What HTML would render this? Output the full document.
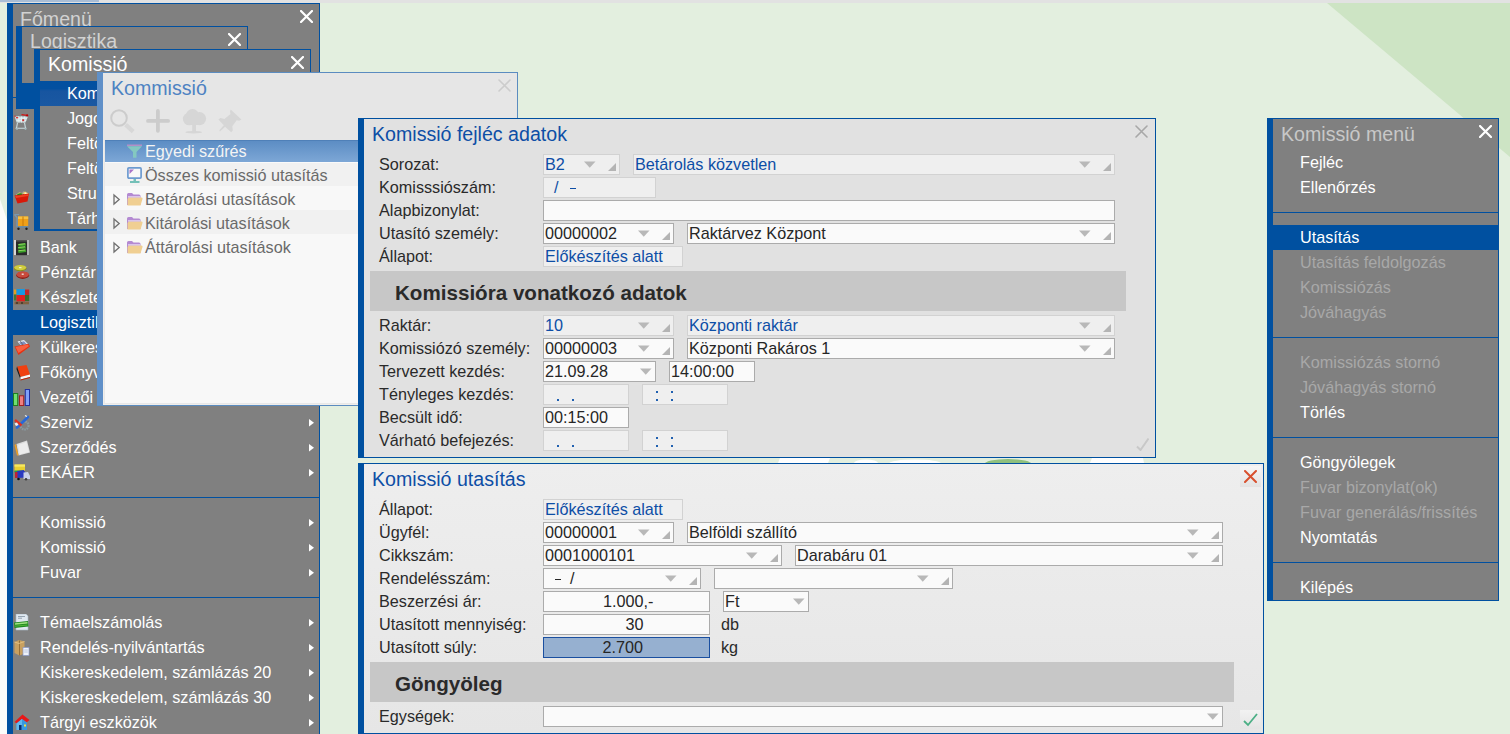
<!DOCTYPE html>
<html><head><meta charset="utf-8"><title>Komissió</title>
<style>
html,body{margin:0;padding:0;}
body{width:1510px;height:734px;overflow:hidden;position:relative;background:#e3efdf;font-family:"Liberation Sans",sans-serif;}
body div, body svg{position:absolute;}
.t{white-space:pre;}
.ico{width:16px;height:16px;}
</style></head><body>
<svg style="left:0;top:0" width="1510" height="734"><polygon points="1327,3 1510,3 1510,157" fill="#cde4c4"/><polygon points="0,199 7,220 7,734 0,734" fill="#fbfcfa"/></svg>
<div style="left:0px;top:0px;width:1510px;height:3px;background:#e2e2e2;"></div>
<div style="left:0px;top:0px;width:99px;height:2px;background:#a9bdd5;"></div>
<div style="left:7px;top:3px;width:313px;height:731px;background:#0050a0;"></div>
<div style="left:13px;top:4px;width:306px;height:730px;background:#808080;"></div>
<div class="t" style="left:20px;top:9px;font-size:19.6px;line-height:20px;color:#d2d2d2;">Főmenü</div>
<svg style="left:300px;top:10px" width="13" height="13" viewBox="0 0 13 13"><path d="M1 1L12 12M12 1L1 12" stroke="#fff" stroke-width="2.2" stroke-linecap="round" fill="none"/></svg>
<div style="left:13px;top:97px;width:306px;height:1px;background:#0050a0;"></div>
<div style="left:13px;top:310px;width:306px;height:25px;background:#0050a0;"></div>
<div style="left:13px;top:497px;width:306px;height:1px;background:#0050a0;"></div>
<div style="left:13px;top:597px;width:306px;height:1px;background:#0050a0;"></div>
<div class="t" style="left:40px;top:114px;font-size:16.2px;line-height:16px;color:#fff;">Beszerzés</div>
<svg style="left:309px;top:119px" width="5" height="7.5"><path d="M0 0L5 3.75L0 7.5Z" fill="#fff"/></svg>
<svg style="left:14px;top:114px" width="17" height="17" viewBox="0 0 17 17"><path d="M0.5 2.2L14 2.6L11.5 8.6L2.6 8.6Z" fill="#c8dcdf"/><path d="M2 4.2H13M2.6 6.4H12.2M4.5 2.4L5 8.6M7.5 2.5L7.6 8.6M10.5 2.6L9.8 8.6" stroke="#e8f4f6" stroke-width="0.8"/><path d="M7.5 0.6L13 1.3" stroke="#d01818" stroke-width="1.3"/><circle cx="13.2" cy="1.4" r="1.1" fill="#c00000"/><circle cx="1" cy="2.2" r="0.8" fill="#c83030"/><rect x="2" y="3" width="2.2" height="1.4" fill="#d83838"/><rect x="8.2" y="5.2" width="2" height="2" fill="#c83030"/><path d="M3.5 8.6L2.5 14.2M10.5 8.6L11.5 14.2M1.5 14.2H12.5" stroke="#c8dce0" stroke-width="1.1" fill="none"/><circle cx="3" cy="15.2" r="0.9" fill="#9ab0b4"/><circle cx="11.5" cy="15.2" r="0.9" fill="#9ab0b4"/></svg>
<div class="t" style="left:40px;top:139px;font-size:16.2px;line-height:16px;color:#fff;">Jogosultság</div>
<svg style="left:309px;top:144px" width="5" height="7.5"><path d="M0 0L5 3.75L0 7.5Z" fill="#fff"/></svg>
<div class="t" style="left:40px;top:164px;font-size:16.2px;line-height:16px;color:#fff;">Feltöltés</div>
<svg style="left:309px;top:169px" width="5" height="7.5"><path d="M0 0L5 3.75L0 7.5Z" fill="#fff"/></svg>
<div class="t" style="left:40px;top:189px;font-size:16.2px;line-height:16px;color:#fff;">Értékesítés</div>
<svg style="left:309px;top:194px" width="5" height="7.5"><path d="M0 0L5 3.75L0 7.5Z" fill="#fff"/></svg>
<svg style="left:14px;top:190px" width="17" height="17" viewBox="0 0 17 17"><path d="M2 5L5 2.5L8 3L11 1.5L14.5 3.5L14 7L3 8Z" fill="#f0d070"/><ellipse cx="6.5" cy="6.2" rx="3.8" ry="3" fill="#108a20"/><path d="M9.5 1L8 6" stroke="#a0a0a0" stroke-width="0.8"/><path d="M11 2.5L14 4L13 7L10 6Z" fill="#f8f0e0"/><path d="M0.5 5.5L15 3.5L13.5 11.5L3.5 13.5Z" fill="#d81808"/><path d="M1 6L14.5 4.2L14 6L2 8Z" fill="#f04020"/></svg>
<div class="t" style="left:40px;top:214px;font-size:16.2px;line-height:16px;color:#fff;">Tárhely</div>
<svg style="left:309px;top:219px" width="5" height="7.5"><path d="M0 0L5 3.75L0 7.5Z" fill="#fff"/></svg>
<svg style="left:14px;top:214px" width="17" height="17" viewBox="0 0 17 17"><path d="M0.5 0.5L3 3.5L3 12.5L14 12.5" stroke="#7898b0" stroke-width="1.3" fill="none"/><path d="M0.5 0.5L5 0.5" stroke="#7898b0" stroke-width="1.1"/><rect x="4" y="2.5" width="10.2" height="9.6" fill="#f0a018"/><path d="M4 2.5L14.2 2.5L14.2 5L4 5Z" fill="#f8c040"/><path d="M9 2.5V12" stroke="#c87808" stroke-width="1"/><rect x="2.5" y="12.3" width="12" height="1.4" fill="#6888a0"/><circle cx="4.5" cy="14.8" r="1.2" fill="#202020"/><circle cx="12.5" cy="14.8" r="1.2" fill="#202020"/></svg>
<div class="t" style="left:40px;top:239px;font-size:16.2px;line-height:16px;color:#fff;">Bank</div>
<svg style="left:309px;top:244px" width="5" height="7.5"><path d="M0 0L5 3.75L0 7.5Z" fill="#fff"/></svg>
<svg style="left:14px;top:240px" width="17" height="17" viewBox="0 0 17 17"><rect x="0" y="0" width="15.2" height="15.2" fill="#2a2a2a"/><rect x="0" y="0" width="2" height="15.2" fill="#d8d8d8"/><rect x="13" y="0" width="2.2" height="15.2" fill="#b8b8b8"/><rect x="2" y="0" width="11" height="1.6" fill="#505050"/><path d="M4 4L11.5 3L12 5.5L4.5 6.5ZM3.8 7L11.5 6L12 8.6L4.3 9.6ZM4 10.2L11.8 9.2L12.2 12L4.5 13Z" fill="#3aa028"/><path d="M4.5 4.5L11 3.8M4.3 7.5L11 6.8M4.5 10.7L11.2 10" stroke="#a8e070" stroke-width="0.8"/></svg>
<div class="t" style="left:40px;top:264px;font-size:16.2px;line-height:16px;color:#fff;">Pénztár</div>
<svg style="left:309px;top:269px" width="5" height="7.5"><path d="M0 0L5 3.75L0 7.5Z" fill="#fff"/></svg>
<svg style="left:14px;top:265px" width="17" height="17" viewBox="0 0 17 17"><ellipse cx="6.2" cy="3.2" rx="6.2" ry="3" fill="#889010"/><ellipse cx="6.2" cy="2.6" rx="6" ry="2.6" fill="#d0cc40"/><ellipse cx="8.7" cy="10.3" rx="6.4" ry="3.6" fill="#8a1c14"/><ellipse cx="8.7" cy="9.5" rx="6.2" ry="3.1" fill="#c84a3c"/><rect x="7.7" y="8.5" width="2" height="1.4" fill="#f0e0d8"/><rect x="5" y="2" width="2.5" height="1.2" fill="#f0f0c0"/></svg>
<div class="t" style="left:40px;top:289px;font-size:16.2px;line-height:16px;color:#fff;">Készletek</div>
<svg style="left:309px;top:294px" width="5" height="7.5"><path d="M0 0L5 3.75L0 7.5Z" fill="#fff"/></svg>
<svg style="left:14px;top:289px" width="17" height="17" viewBox="0 0 17 17"><rect x="0" y="0.5" width="2.5" height="5" fill="#e0a020"/><rect x="2.5" y="0" width="8.5" height="6" fill="#1898e0"/><rect x="11" y="0.5" width="4.2" height="5.5" fill="#c02828"/><rect x="0" y="5.5" width="2.5" height="6" fill="#407830"/><rect x="2.5" y="6" width="8.5" height="6.5" fill="#e02020"/><rect x="11" y="6" width="4.2" height="6" fill="#3a6a2a"/><rect x="0.5" y="12.5" width="14.5" height="2.8" fill="#806040"/><rect x="2" y="13" width="2" height="2" fill="#504030"/><rect x="7" y="13" width="2" height="2" fill="#504030"/></svg>
<div class="t" style="left:40px;top:314px;font-size:16.2px;line-height:16px;color:#fff;">Logisztika</div>
<svg style="left:309px;top:319px" width="5" height="7.5"><path d="M0 0L5 3.75L0 7.5Z" fill="#fff"/></svg>
<div class="t" style="left:40px;top:339px;font-size:16.2px;line-height:16px;color:#fff;">Külkereskedelem</div>
<svg style="left:309px;top:344px" width="5" height="7.5"><path d="M0 0L5 3.75L0 7.5Z" fill="#fff"/></svg>
<svg style="left:13.5px;top:340px" width="17" height="17" viewBox="0 0 17 17"><path d="M3.5 1.5L10 0L14 4L7.5 6Z" fill="#e8eef8"/><path d="M5 2.5L10 1.2L12.5 4L7.5 5.5Z" fill="#8090c0"/><path d="M6 0.5L9 5" stroke="#606060" stroke-width="0.8"/><path d="M0.5 6.5L14.5 3.8L16 6.5L4.5 15Z" fill="#e83010"/><path d="M1.5 7L14 4.5L14.8 6.3L4.5 13Z" fill="#f86040"/></svg>
<div class="t" style="left:40px;top:364px;font-size:16.2px;line-height:16px;color:#fff;">Főkönyv</div>
<svg style="left:309px;top:369px" width="5" height="7.5"><path d="M0 0L5 3.75L0 7.5Z" fill="#fff"/></svg>
<svg style="left:14.5px;top:364.5px" width="17" height="17" viewBox="0 0 17 17"><path d="M2 1.5L11.5 0L15 9.5L5.5 12Z" fill="#f04010"/><path d="M2 1.5L5.5 12L5.5 14.5L1.5 4Z" fill="#181818"/><path d="M5.5 12L15 9.5L15 12L5.5 14.5Z" fill="#f8f8f8"/><path d="M5.5 14.5L15 12L15 13L5.5 15.5Z" fill="#c02000"/></svg>
<div class="t" style="left:40px;top:389px;font-size:16.2px;line-height:16px;color:#fff;">Vezetői információ</div>
<svg style="left:309px;top:394px" width="5" height="7.5"><path d="M0 0L5 3.75L0 7.5Z" fill="#fff"/></svg>
<svg style="left:13px;top:389px" width="17" height="17" viewBox="0 0 17 17"><rect x="0.5" y="4.5" width="4.2" height="12" fill="#70e070" stroke="#208020" stroke-width="1"/><rect x="6.5" y="6.8" width="4.2" height="9.7" fill="#f08080" stroke="#a02020" stroke-width="1"/><rect x="12.3" y="0.5" width="4.2" height="16" fill="#80a0f8" stroke="#2030a0" stroke-width="1"/></svg>
<div class="t" style="left:40px;top:414px;font-size:16.2px;line-height:16px;color:#fff;">Szerviz</div>
<svg style="left:309px;top:419px" width="5" height="7.5"><path d="M0 0L5 3.75L0 7.5Z" fill="#fff"/></svg>
<svg style="left:13.5px;top:415px" width="17" height="17" viewBox="0 0 17 17"><circle cx="10.5" cy="10.5" r="4" fill="none" stroke="#8a9aa0" stroke-width="2.2" stroke-dasharray="1.6 0.8"/><path d="M3 12.5L14 2" stroke="#2868d8" stroke-width="2.6" stroke-linecap="round"/><path d="M1 5L7.5 10.5" stroke="#e03020" stroke-width="2.4"/><path d="M0.5 8.5L3 7.5L4.5 10L2 11" fill="#f0f0f0"/><path d="M11 0.5L13 1.5" stroke="#f0f0f0" stroke-width="1.2"/></svg>
<div class="t" style="left:40px;top:439px;font-size:16.2px;line-height:16px;color:#fff;">Szerződés</div>
<svg style="left:309px;top:444px" width="5" height="7.5"><path d="M0 0L5 3.75L0 7.5Z" fill="#fff"/></svg>
<svg style="left:13.5px;top:440px" width="17" height="17" viewBox="0 0 17 17"><path d="M2.5 4L13 0.5L16 12.5L4.5 15.5Z" fill="#dcdcdc"/><path d="M4 5L12.5 2L15 12L5.5 14.5Z" fill="#ececec"/><path d="M2 4L4.5 15.5L3 15.5L0.5 5Z" fill="#f0a020"/></svg>
<div class="t" style="left:40px;top:464px;font-size:16.2px;line-height:16px;color:#fff;">EKÁER</div>
<svg style="left:309px;top:469px" width="5" height="7.5"><path d="M0 0L5 3.75L0 7.5Z" fill="#fff"/></svg>
<svg style="left:13.5px;top:464px" width="17" height="17" viewBox="0 0 17 17"><rect x="0.5" y="0.5" width="10.5" height="6.5" fill="#e8d030"/><rect x="0.5" y="0.5" width="10.5" height="2.2" fill="#f8e860"/><rect x="0.5" y="6.5" width="9" height="2" fill="#20a040"/><path d="M3 7L10 6L11.5 9L11.5 13.5L3 14Z" fill="#2838c0"/><rect x="1" y="8" width="2.5" height="6" fill="#c02030"/><path d="M9.5 8.5L14 8L16 12L16 15L9.5 15Z" fill="#c8d0e8"/><circle cx="4.5" cy="15" r="1.3" fill="#101010"/><circle cx="12" cy="15.3" r="1.3" fill="#404040"/></svg>
<div class="t" style="left:40px;top:514px;font-size:16.2px;line-height:16px;color:#fff;">Komissió</div>
<svg style="left:309px;top:519px" width="5" height="7.5"><path d="M0 0L5 3.75L0 7.5Z" fill="#fff"/></svg>
<div class="t" style="left:40px;top:539px;font-size:16.2px;line-height:16px;color:#fff;">Komissió</div>
<svg style="left:309px;top:544px" width="5" height="7.5"><path d="M0 0L5 3.75L0 7.5Z" fill="#fff"/></svg>
<div class="t" style="left:40px;top:564px;font-size:16.2px;line-height:16px;color:#fff;">Fuvar</div>
<svg style="left:309px;top:569px" width="5" height="7.5"><path d="M0 0L5 3.75L0 7.5Z" fill="#fff"/></svg>
<div class="t" style="left:40px;top:614px;font-size:16.2px;line-height:16px;color:#fff;">Témaelszámolás</div>
<svg style="left:309px;top:619px" width="5" height="7.5"><path d="M0 0L5 3.75L0 7.5Z" fill="#fff"/></svg>
<svg style="left:14px;top:614px" width="17" height="17" viewBox="0 0 17 17"><path d="M2 0L12 0L14 2L14 16L2 16Z" fill="#e0e8f0"/><path d="M2 0L12 0L14 2L14 16L2 16Z" fill="none" stroke="#a8b8c8" stroke-width="0.6"/><path d="M4 2.5H11M4 4.2H8" stroke="#8090a0" stroke-width="0.8"/><path d="M0 8.5L14 7L14.5 12.5L0.5 14Z" fill="#208a20"/><path d="M1 10L13.5 8.8" stroke="#a0e080" stroke-width="1.4"/><path d="M1 12.2L13.5 11" stroke="#60c040" stroke-width="0.8"/></svg>
<div class="t" style="left:40px;top:639px;font-size:16.2px;line-height:16px;color:#fff;">Rendelés-nyilvántartás</div>
<svg style="left:309px;top:644px" width="5" height="7.5"><path d="M0 0L5 3.75L0 7.5Z" fill="#fff"/></svg>
<svg style="left:14px;top:639.5px" width="17" height="17" viewBox="0 0 17 17"><path d="M0.5 2L5 0L10.5 1.5L10.5 13.5L5.5 15.5L0.5 13Z" fill="#c8a060"/><path d="M5.5 0.5L5.5 15.5" stroke="#987038" stroke-width="1"/><path d="M0.5 2L5 3.5L10.5 1.5" stroke="#e8c888" stroke-width="0.8" fill="none"/><rect x="9" y="7.5" width="6" height="8" fill="#eef2fa" stroke="#8898c8" stroke-width="0.7"/><path d="M10.2 10H13.8M10.2 12H13.8" stroke="#98a8d0" stroke-width="0.6"/></svg>
<div class="t" style="left:40px;top:664px;font-size:16.2px;line-height:16px;color:#fff;">Kiskereskedelem, számlázás 20</div>
<svg style="left:309px;top:669px" width="5" height="7.5"><path d="M0 0L5 3.75L0 7.5Z" fill="#fff"/></svg>
<div class="t" style="left:40px;top:689px;font-size:16.2px;line-height:16px;color:#fff;">Kiskereskedelem, számlázás 30</div>
<svg style="left:309px;top:694px" width="5" height="7.5"><path d="M0 0L5 3.75L0 7.5Z" fill="#fff"/></svg>
<div class="t" style="left:40px;top:714px;font-size:16.2px;line-height:16px;color:#fff;">Tárgyi eszközök</div>
<svg style="left:309px;top:719px" width="5" height="7.5"><path d="M0 0L5 3.75L0 7.5Z" fill="#fff"/></svg>
<svg style="left:14px;top:714px" width="17" height="17" viewBox="0 0 17 17"><path d="M0.5 8L8.5 0.5L15.5 6L12.5 8.5L8 5L3 9.5Z" fill="#e81818"/><path d="M2.5 9.5L8 5L13 8.5L13 16L2.5 16Z" fill="#3898e0"/><path d="M2.5 9.5L8 5L8 16L2.5 16Z" fill="#60b8f0"/><rect x="5" y="11" width="2.6" height="5" fill="#0a3070"/><rect x="10" y="10.5" width="2" height="2" fill="#f0e040"/></svg>
<div style="left:319px;top:3px;width:1px;height:731px;background:#0050a0;"></div>
<div style="left:16px;top:26px;width:232px;height:83px;background:#0050a0;"></div>
<div style="left:22px;top:27px;width:225px;height:56px;background:#808080;"></div>
<div class="t" style="left:30px;top:31px;font-size:19.6px;line-height:20px;color:#d2d2d2;">Logisztika</div>
<svg style="left:228px;top:33px" width="13" height="13" viewBox="0 0 13 13"><path d="M1 1L12 12M12 1L1 12" stroke="#fff" stroke-width="2.2" stroke-linecap="round" fill="none"/></svg>
<div style="left:34px;top:49px;width:277px;height:182px;background:#0050a0;"></div>
<div style="left:40px;top:50px;width:270px;height:179px;background:#808080;"></div>
<div class="t" style="left:48px;top:54px;font-size:19.6px;line-height:20px;color:#fff;">Komissió</div>
<svg style="left:291px;top:56px" width="13" height="13" viewBox="0 0 13 13"><path d="M1 1L12 12M12 1L1 12" stroke="#fff" stroke-width="2.2" stroke-linecap="round" fill="none"/></svg>
<div style="left:40px;top:81px;width:270px;height:25px;background:linear-gradient(#0250a0 0%,#0350a0 30%,#1755a0 40%,#1a58a2 100%);"></div>
<div class="t" style="left:67px;top:85px;font-size:16.2px;line-height:16px;color:#fff;">Komissió</div>
<div class="t" style="left:67px;top:110px;font-size:16.2px;line-height:16px;color:#fff;">Jogosultság</div>
<div class="t" style="left:67px;top:135px;font-size:16.2px;line-height:16px;color:#fff;">Feltöltés</div>
<div class="t" style="left:67px;top:160px;font-size:16.2px;line-height:16px;color:#fff;">Feltöltés</div>
<div class="t" style="left:67px;top:185px;font-size:16.2px;line-height:16px;color:#fff;">Struktúra</div>
<div class="t" style="left:67px;top:210px;font-size:16.2px;line-height:16px;color:#fff;">Tárhely</div>
<div id="tree" style="left:97px;top:72px;width:421px;height:334px;background:#e6e6e6;">
</div>
<div style="left:97px;top:72px;width:421px;height:1px;background:#5b8cc0;"></div>
<div style="left:97px;top:72px;width:6px;height:334px;background:#6090c8;"></div>
<div style="left:517px;top:72px;width:1px;height:334px;background:#5b8cc0;"></div>
<div style="left:97px;top:405px;width:421px;height:1px;background:#5b8cc0;"></div>
<div class="t" style="left:111px;top:78px;font-size:19.6px;line-height:20px;color:#4d82c2;">Kommissió</div>
<svg style="left:498px;top:79px" width="13" height="13" viewBox="0 0 13 13"><path d="M1 1L12 12M12 1L1 12" stroke="#cccccc" stroke-width="1.6" stroke-linecap="round" fill="none"/></svg>
<div style="left:103px;top:140px;width:414px;height:265px;background:#f0eeeb;"></div>
<div style="left:104px;top:140px;width:413px;height:264px;background:#e8e8e8;"></div>
<div style="left:105px;top:140px;width:412px;height:263px;background:#f8f8f8;"></div>
<div style="left:105px;top:140px;width:412px;height:22px;background:linear-gradient(#5c8dc4,#7da7d6);border-top:1px solid #4f80b8;box-sizing:border-box;"></div>
<div style="left:105px;top:162px;width:412px;height:1px;background:#fafafa;"></div>
<div style="left:105px;top:163px;width:412px;height:23px;background:#f1f1f1;"></div>
<div style="left:105px;top:186px;width:412px;height:24px;background:#f8f8f8;"></div>
<div style="left:105px;top:210px;width:412px;height:24px;background:#f1f1f1;"></div>
<div style="left:105px;top:234px;width:412px;height:24px;background:#f8f8f8;"></div>
<div class="t" style="left:145px;top:143px;font-size:16.2px;line-height:16px;color:#f4f4f4;">Egyedi szűrés</div>
<div class="t" style="left:145px;top:167px;font-size:16.2px;line-height:16px;color:#6a6a6a;">Összes komissió utasítás</div>
<div class="t" style="left:145px;top:191px;font-size:16.2px;line-height:16px;color:#6a6a6a;">Betárolási utasítások</div>
<div class="t" style="left:145px;top:215px;font-size:16.2px;line-height:16px;color:#6a6a6a;">Kitárolási utasítások</div>
<div class="t" style="left:145px;top:239px;font-size:16.2px;line-height:16px;color:#6a6a6a;">Áttárolási utasítások</div>
<svg style="left:108px;top:107px" width="28" height="28" viewBox="0 0 28 28"><circle cx="11" cy="11" r="7.8" stroke="#cccccc" stroke-width="2" fill="none"/><path d="M17.6 17.6L25.2 24.6" stroke="#d8d8d8" stroke-width="4.2" stroke-linecap="butt"/></svg>
<svg style="left:144px;top:107px" width="28" height="28" viewBox="0 0 28 28"><path d="M13.9 4V23.8M4 13.9H24.1" stroke="#cccccc" stroke-width="3.8" stroke-linecap="round"/></svg>
<svg style="left:182px;top:108px" width="25" height="26" viewBox="0 0 25 26"><g fill="#d6d6d6"><circle cx="7.2" cy="11" r="6.3"/><circle cx="10.5" cy="7.6" r="6.6"/><circle cx="17.5" cy="10.6" r="6.6"/><rect x="5" y="9" width="14" height="8" rx="3"/><rect x="10.2" y="15" width="3.8" height="9"/><ellipse cx="11.7" cy="24.2" rx="8.4" ry="1.2"/></g></svg>
<svg style="left:218px;top:108px" width="25" height="26" viewBox="0 0 25 26"><path d="M12.7 1.6L23.4 11.5L21.1 12.7L18.7 12.2L14.3 18.3L14.8 22.4L13.2 24.3L7.1 18.7L2 23.4L1.3 22.2L5.8 17.3L0.4 11.5L2.5 10.1L6.4 11.1L12.5 6L12 3.4Z" fill="#d6d6d6"/></svg>
<svg style="left:127px;top:144px" width="16" height="15" viewBox="0 0 16 15"><rect x="0" y="0.6" width="15" height="1.2" fill="#c890c8"/><path d="M0 2.2L15 2.2L9.5 8L9.5 13.8L6 13.8L6 8Z" fill="#84c8c0"/></svg>
<svg style="left:127px;top:167px" width="16" height="17" viewBox="0 0 16 17"><rect x="0.9" y="0.9" width="13.2" height="10.2" rx="1" fill="#f8f8f8" stroke="#6d9bd0" stroke-width="1.7"/><path d="M2.5 2.5L7 2.5L2.5 7Z" fill="#a874c8"/><rect x="6.5" y="12" width="2.5" height="2" fill="#74c0b8"/><rect x="3" y="14" width="9.5" height="2" fill="#74c0b8"/></svg>
<svg style="left:112px;top:193px" width="9" height="13" viewBox="0 0 9 13"><path d="M2 2L7.2 6.5L2 11Z" fill="none" stroke="#707070" stroke-width="1.3"/></svg>
<svg style="left:127px;top:193px" width="16" height="14" viewBox="0 0 16 14"><path d="M0 1.5Q0 0 1.5 0L5 0L6.5 1.5L12 1.5Q13.5 1.5 13.5 3L13.5 12L0 12Z" fill="#b48ad2"/><path d="M1.5 4.5L14.5 4.5Q16 4.5 15.5 6L13.5 12.5L0.5 12.5L0.5 6Z" fill="#f0cf92"/><rect x="1" y="3" width="12" height="1.6" fill="#fff" opacity="0.5"/></svg>
<svg style="left:112px;top:217px" width="9" height="13" viewBox="0 0 9 13"><path d="M2 2L7.2 6.5L2 11Z" fill="none" stroke="#707070" stroke-width="1.3"/></svg>
<svg style="left:127px;top:217px" width="16" height="14" viewBox="0 0 16 14"><path d="M0 1.5Q0 0 1.5 0L5 0L6.5 1.5L12 1.5Q13.5 1.5 13.5 3L13.5 12L0 12Z" fill="#b48ad2"/><path d="M1.5 4.5L14.5 4.5Q16 4.5 15.5 6L13.5 12.5L0.5 12.5L0.5 6Z" fill="#f0cf92"/><rect x="1" y="3" width="12" height="1.6" fill="#fff" opacity="0.5"/></svg>
<svg style="left:112px;top:241px" width="9" height="13" viewBox="0 0 9 13"><path d="M2 2L7.2 6.5L2 11Z" fill="none" stroke="#707070" stroke-width="1.3"/></svg>
<svg style="left:127px;top:241px" width="16" height="14" viewBox="0 0 16 14"><path d="M0 1.5Q0 0 1.5 0L5 0L6.5 1.5L12 1.5Q13.5 1.5 13.5 3L13.5 12L0 12Z" fill="#b48ad2"/><path d="M1.5 4.5L14.5 4.5Q16 4.5 15.5 6L13.5 12.5L0.5 12.5L0.5 6Z" fill="#f0cf92"/><rect x="1" y="3" width="12" height="1.6" fill="#fff" opacity="0.5"/></svg>
<svg style="left:740px;top:458px" width="420" height="5" viewBox="0 0 420 5"><path d="M40 0L90 0L88 5L38 5Z" fill="#ffffff"/><ellipse cx="126" cy="5" rx="12" ry="3.5" fill="#fff"/><ellipse cx="175" cy="5.5" rx="26" ry="4" fill="#fff"/><ellipse cx="268" cy="6.5" rx="24" ry="5.5" fill="#8fc07e"/><path d="M352 0L403 0L404 5L350 5Z" fill="#fff"/></svg>
<div style="left:358px;top:118px;width:798px;height:340px;background:#e1e1e1;"></div>
<div style="left:358px;top:118px;width:798px;height:1px;background:#0050a0;"></div>
<div style="left:358px;top:118px;width:6px;height:340px;background:#0050a0;"></div>
<div style="left:1155px;top:118px;width:1px;height:340px;background:#0050a0;"></div>
<div style="left:358px;top:457px;width:798px;height:1px;background:#0050a0;"></div>
<div class="t" style="left:372px;top:124px;font-size:19.6px;line-height:20px;color:#0d4ea6;">Komissió fejléc adatok</div>
<svg style="left:1135px;top:125px" width="13" height="13" viewBox="0 0 13 13"><path d="M1 1L12 12M12 1L1 12" stroke="#a8a8a8" stroke-width="1.6" stroke-linecap="round" fill="none"/></svg>
<div class="t" style="left:379px;top:156px;font-size:16.2px;line-height:16px;color:#2a2a2a;">Sorozat:</div>
<div style="left:543px;top:154px;width:77px;height:21px;background:#efefef;border:1px solid #d2d2d2;box-sizing:border-box;"></div>
<div class="t" style="left:545px;top:156px;font-size:16.2px;line-height:16px;color:#0d4ea6;">B2</div>
<svg style="left:608px;top:163px" width="9" height="9"><path d="M8 0L8 8L0 8Z" fill="#b4b4b4"/></svg>
<svg style="left:584px;top:161px" width="12" height="8"><path d="M0 0.5L11.5 0.5L5.75 6.8Z" fill="#b8b8b8"/></svg>
<div style="left:633px;top:154px;width:482px;height:21px;background:#efefef;border:1px solid #d2d2d2;box-sizing:border-box;"></div>
<div class="t" style="left:635px;top:156px;font-size:16.2px;line-height:16px;color:#0d4ea6;">Betárolás közvetlen</div>
<svg style="left:1103px;top:163px" width="9" height="9"><path d="M8 0L8 8L0 8Z" fill="#b4b4b4"/></svg>
<svg style="left:1079px;top:161px" width="12" height="8"><path d="M0 0.5L11.5 0.5L5.75 6.8Z" fill="#b8b8b8"/></svg>
<div class="t" style="left:379px;top:179px;font-size:16.2px;line-height:16px;color:#2a2a2a;">Komisssiószám:</div>
<div style="left:543px;top:177px;width:113px;height:21px;background:#efefef;border:1px solid #d2d2d2;box-sizing:border-box;"></div>
<div class="t" style="left:554px;top:179px;font-size:16.2px;line-height:16px;color:#0d4ea6;">/</div>
<div style="left:570px;top:188px;width:6px;height:1px;background:#0d4ea6;"></div>
<div class="t" style="left:379px;top:202px;font-size:16.2px;line-height:16px;color:#2a2a2a;">Alapbizonylat:</div>
<div style="left:543px;top:200px;width:572px;height:21px;background:#fafafa;border:1px solid #ababab;box-sizing:border-box;"></div>
<div class="t" style="left:379px;top:225px;font-size:16.2px;line-height:16px;color:#2a2a2a;">Utasító személy:</div>
<div style="left:543px;top:223px;width:131px;height:21px;background:#fafafa;border:1px solid #ababab;box-sizing:border-box;"></div>
<div class="t" style="left:545px;top:225px;font-size:16.2px;line-height:16px;color:#262626;">00000002</div>
<svg style="left:662px;top:232px" width="9" height="9"><path d="M8 0L8 8L0 8Z" fill="#b4b4b4"/></svg>
<svg style="left:638px;top:230px" width="12" height="8"><path d="M0 0.5L11.5 0.5L5.75 6.8Z" fill="#b8b8b8"/></svg>
<div style="left:687px;top:223px;width:428px;height:21px;background:#fafafa;border:1px solid #ababab;box-sizing:border-box;"></div>
<div class="t" style="left:689px;top:225px;font-size:16.2px;line-height:16px;color:#262626;">Raktárvez Központ</div>
<svg style="left:1103px;top:232px" width="9" height="9"><path d="M8 0L8 8L0 8Z" fill="#b4b4b4"/></svg>
<svg style="left:1079px;top:230px" width="12" height="8"><path d="M0 0.5L11.5 0.5L5.75 6.8Z" fill="#b8b8b8"/></svg>
<div class="t" style="left:379px;top:248px;font-size:16.2px;line-height:16px;color:#2a2a2a;">Állapot:</div>
<div style="left:543px;top:246px;width:140px;height:21px;background:#efefef;border:1px solid #d2d2d2;box-sizing:border-box;"></div>
<div class="t" style="left:545px;top:248px;font-size:16.2px;line-height:16px;color:#0d4ea6;">Előkészítés alatt</div>
<div style="left:370px;top:271px;width:756px;height:40px;background:#c7c7c7;"></div>
<div class="t" style="left:395px;top:283px;font-size:20.6px;line-height:20.6px;color:#2a2a2a;font-weight:bold;">Komissióra vonatkozó adatok</div>
<div class="t" style="left:379px;top:317px;font-size:16.2px;line-height:16px;color:#2a2a2a;">Raktár:</div>
<div style="left:543px;top:315px;width:131px;height:21px;background:#efefef;border:1px solid #d2d2d2;box-sizing:border-box;"></div>
<div class="t" style="left:545px;top:317px;font-size:16.2px;line-height:16px;color:#0d4ea6;">10</div>
<svg style="left:662px;top:324px" width="9" height="9"><path d="M8 0L8 8L0 8Z" fill="#b4b4b4"/></svg>
<svg style="left:638px;top:322px" width="12" height="8"><path d="M0 0.5L11.5 0.5L5.75 6.8Z" fill="#b8b8b8"/></svg>
<div style="left:687px;top:315px;width:428px;height:21px;background:#efefef;border:1px solid #d2d2d2;box-sizing:border-box;"></div>
<div class="t" style="left:689px;top:317px;font-size:16.2px;line-height:16px;color:#0d4ea6;">Központi raktár</div>
<svg style="left:1103px;top:324px" width="9" height="9"><path d="M8 0L8 8L0 8Z" fill="#b4b4b4"/></svg>
<svg style="left:1079px;top:322px" width="12" height="8"><path d="M0 0.5L11.5 0.5L5.75 6.8Z" fill="#b8b8b8"/></svg>
<div class="t" style="left:379px;top:340px;font-size:16.2px;line-height:16px;color:#2a2a2a;">Komissiózó személy:</div>
<div style="left:543px;top:338px;width:131px;height:21px;background:#fafafa;border:1px solid #ababab;box-sizing:border-box;"></div>
<div class="t" style="left:545px;top:340px;font-size:16.2px;line-height:16px;color:#262626;">00000003</div>
<svg style="left:662px;top:347px" width="9" height="9"><path d="M8 0L8 8L0 8Z" fill="#b4b4b4"/></svg>
<svg style="left:638px;top:345px" width="12" height="8"><path d="M0 0.5L11.5 0.5L5.75 6.8Z" fill="#b8b8b8"/></svg>
<div style="left:687px;top:338px;width:428px;height:21px;background:#fafafa;border:1px solid #ababab;box-sizing:border-box;"></div>
<div class="t" style="left:689px;top:340px;font-size:16.2px;line-height:16px;color:#262626;">Központi Rakáros 1</div>
<svg style="left:1103px;top:347px" width="9" height="9"><path d="M8 0L8 8L0 8Z" fill="#b4b4b4"/></svg>
<svg style="left:1079px;top:345px" width="12" height="8"><path d="M0 0.5L11.5 0.5L5.75 6.8Z" fill="#b8b8b8"/></svg>
<div class="t" style="left:379px;top:363px;font-size:16.2px;line-height:16px;color:#2a2a2a;">Tervezett kezdés:</div>
<div style="left:543px;top:361px;width:113px;height:21px;background:#fafafa;border:1px solid #ababab;box-sizing:border-box;"></div>
<div class="t" style="left:545px;top:363px;font-size:16.2px;line-height:16px;color:#262626;">21.09.28</div>
<svg style="left:640px;top:368px" width="12" height="8"><path d="M0 0.5L11.5 0.5L5.75 6.8Z" fill="#b8b8b8"/></svg>
<div style="left:669px;top:361px;width:86px;height:21px;background:#fafafa;border:1px solid #ababab;box-sizing:border-box;"></div>
<div class="t" style="left:671px;top:363px;font-size:16.2px;line-height:16px;color:#262626;">14:00:00</div>
<div class="t" style="left:379px;top:386px;font-size:16.2px;line-height:16px;color:#2a2a2a;">Tényleges kezdés:</div>
<div style="left:543px;top:384px;width:86px;height:21px;background:#efefef;border:1px solid #d2d2d2;box-sizing:border-box;"></div>
<div style="left:557px;top:399px;width:1.6px;height:1.6px;background:#2060b0;"></div>
<div style="left:572px;top:399px;width:1.6px;height:1.6px;background:#2060b0;"></div>
<div style="left:642px;top:384px;width:86px;height:21px;background:#efefef;border:1px solid #d2d2d2;box-sizing:border-box;"></div>
<div style="left:656px;top:391px;width:1.6px;height:1.6px;background:#2060b0;"></div>
<div style="left:656px;top:399px;width:1.6px;height:1.6px;background:#2060b0;"></div>
<div style="left:671px;top:391px;width:1.6px;height:1.6px;background:#2060b0;"></div>
<div style="left:671px;top:399px;width:1.6px;height:1.6px;background:#2060b0;"></div>
<div class="t" style="left:379px;top:409px;font-size:16.2px;line-height:16px;color:#2a2a2a;">Becsült idő:</div>
<div style="left:543px;top:407px;width:86px;height:21px;background:#fafafa;border:1px solid #ababab;box-sizing:border-box;"></div>
<div class="t" style="left:545px;top:409px;font-size:16.2px;line-height:16px;color:#262626;">00:15:00</div>
<div class="t" style="left:379px;top:432px;font-size:16.2px;line-height:16px;color:#2a2a2a;">Várható befejezés:</div>
<div style="left:543px;top:430px;width:86px;height:21px;background:#efefef;border:1px solid #d2d2d2;box-sizing:border-box;"></div>
<div style="left:557px;top:445px;width:1.6px;height:1.6px;background:#2060b0;"></div>
<div style="left:572px;top:445px;width:1.6px;height:1.6px;background:#2060b0;"></div>
<div style="left:642px;top:430px;width:86px;height:21px;background:#efefef;border:1px solid #d2d2d2;box-sizing:border-box;"></div>
<div style="left:656px;top:437px;width:1.6px;height:1.6px;background:#2060b0;"></div>
<div style="left:656px;top:445px;width:1.6px;height:1.6px;background:#2060b0;"></div>
<div style="left:671px;top:437px;width:1.6px;height:1.6px;background:#2060b0;"></div>
<div style="left:671px;top:445px;width:1.6px;height:1.6px;background:#2060b0;"></div>
<svg style="left:1136px;top:437px" width="13" height="14"><path d="M1 9.5L4.5 13L12.5 1.5" stroke="#c8c8c8" stroke-width="2" fill="none"/></svg>
<div style="left:358px;top:463px;width:906px;height:271px;background:linear-gradient(#eeeeee,#e6e6e6);"></div>
<div style="left:358px;top:463px;width:906px;height:1px;background:#0050a0;"></div>
<div style="left:358px;top:463px;width:6px;height:271px;background:#0050a0;"></div>
<div style="left:1263px;top:463px;width:1px;height:271px;background:#0050a0;"></div>
<div style="left:358px;top:733px;width:906px;height:1px;background:#0050a0;"></div>
<div class="t" style="left:372px;top:469px;font-size:19.6px;line-height:20px;color:#0d4ea6;">Komissió utasítás</div>
<div style="left:1240px;top:466px;width:21px;height:21px;background:linear-gradient(#f6f6f6,#e2e2e2);"></div>
<svg style="left:1244px;top:470px" width="13" height="13" viewBox="0 0 13 13"><path d="M1 1L12 12M12 1L1 12" stroke="#d8502e" stroke-width="2" stroke-linecap="round" fill="none"/></svg>
<div class="t" style="left:379px;top:501px;font-size:16.2px;line-height:16px;color:#2a2a2a;">Állapot:</div>
<div style="left:543px;top:499px;width:140px;height:21px;background:#efefef;border:1px solid #d2d2d2;box-sizing:border-box;"></div>
<div class="t" style="left:545px;top:501px;font-size:16.2px;line-height:16px;color:#0d4ea6;">Előkészítés alatt</div>
<div class="t" style="left:379px;top:524px;font-size:16.2px;line-height:16px;color:#2a2a2a;">Ügyfél:</div>
<div style="left:543px;top:522px;width:131px;height:21px;background:#fafafa;border:1px solid #ababab;box-sizing:border-box;"></div>
<div class="t" style="left:545px;top:524px;font-size:16.2px;line-height:16px;color:#262626;">00000001</div>
<svg style="left:662px;top:531px" width="9" height="9"><path d="M8 0L8 8L0 8Z" fill="#b4b4b4"/></svg>
<svg style="left:638px;top:529px" width="12" height="8"><path d="M0 0.5L11.5 0.5L5.75 6.8Z" fill="#b8b8b8"/></svg>
<div style="left:687px;top:522px;width:536px;height:21px;background:#fafafa;border:1px solid #ababab;box-sizing:border-box;"></div>
<div class="t" style="left:689px;top:524px;font-size:16.2px;line-height:16px;color:#262626;">Belföldi szállító</div>
<svg style="left:1211px;top:531px" width="9" height="9"><path d="M8 0L8 8L0 8Z" fill="#b4b4b4"/></svg>
<svg style="left:1187px;top:529px" width="12" height="8"><path d="M0 0.5L11.5 0.5L5.75 6.8Z" fill="#b8b8b8"/></svg>
<div class="t" style="left:379px;top:547px;font-size:16.2px;line-height:16px;color:#2a2a2a;">Cikkszám:</div>
<div style="left:543px;top:545px;width:239px;height:21px;background:#fafafa;border:1px solid #ababab;box-sizing:border-box;"></div>
<div class="t" style="left:545px;top:547px;font-size:16.2px;line-height:16px;color:#262626;">0001000101</div>
<svg style="left:770px;top:554px" width="9" height="9"><path d="M8 0L8 8L0 8Z" fill="#b4b4b4"/></svg>
<svg style="left:746px;top:552px" width="12" height="8"><path d="M0 0.5L11.5 0.5L5.75 6.8Z" fill="#b8b8b8"/></svg>
<div style="left:795px;top:545px;width:428px;height:21px;background:#fafafa;border:1px solid #ababab;box-sizing:border-box;"></div>
<div class="t" style="left:797px;top:547px;font-size:16.2px;line-height:16px;color:#262626;">Darabáru 01</div>
<svg style="left:1211px;top:554px" width="9" height="9"><path d="M8 0L8 8L0 8Z" fill="#b4b4b4"/></svg>
<svg style="left:1187px;top:552px" width="12" height="8"><path d="M0 0.5L11.5 0.5L5.75 6.8Z" fill="#b8b8b8"/></svg>
<div class="t" style="left:379px;top:570px;font-size:16.2px;line-height:16px;color:#2a2a2a;">Rendelésszám:</div>
<div style="left:543px;top:568px;width:158px;height:21px;background:#fafafa;border:1px solid #ababab;box-sizing:border-box;"></div>
<svg style="left:689px;top:577px" width="9" height="9"><path d="M8 0L8 8L0 8Z" fill="#b4b4b4"/></svg>
<svg style="left:665px;top:575px" width="12" height="8"><path d="M0 0.5L11.5 0.5L5.75 6.8Z" fill="#b8b8b8"/></svg>
<div style="left:555px;top:579px;width:6px;height:1px;background:#262626;"></div>
<div class="t" style="left:570px;top:570px;font-size:16.2px;line-height:16px;color:#262626;">/</div>
<div style="left:714px;top:568px;width:239px;height:21px;background:#fafafa;border:1px solid #ababab;box-sizing:border-box;"></div>
<svg style="left:941px;top:577px" width="9" height="9"><path d="M8 0L8 8L0 8Z" fill="#b4b4b4"/></svg>
<svg style="left:917px;top:575px" width="12" height="8"><path d="M0 0.5L11.5 0.5L5.75 6.8Z" fill="#b8b8b8"/></svg>
<div class="t" style="left:379px;top:593px;font-size:16.2px;line-height:16px;color:#2a2a2a;">Beszerzési ár:</div>
<div style="left:543px;top:591px;width:167px;height:21px;background:#fafafa;border:1px solid #ababab;box-sizing:border-box;"></div>
<div class="t" style="left:603px;top:593px;font-size:16.2px;line-height:16px;color:#262626;">1.000,-</div>
<div style="left:723px;top:591px;width:86px;height:21px;background:#fafafa;border:1px solid #ababab;box-sizing:border-box;"></div>
<div class="t" style="left:725px;top:593px;font-size:16.2px;line-height:16px;color:#262626;">Ft</div>
<svg style="left:793px;top:598px" width="12" height="8"><path d="M0 0.5L11.5 0.5L5.75 6.8Z" fill="#b8b8b8"/></svg>
<div class="t" style="left:379px;top:616px;font-size:16.2px;line-height:16px;color:#2a2a2a;">Utasított mennyiség:</div>
<div style="left:543px;top:614px;width:167px;height:21px;background:#fafafa;border:1px solid #ababab;box-sizing:border-box;"></div>
<div class="t" style="left:625.5px;top:616px;font-size:16.2px;line-height:16px;color:#262626;">30</div>
<div class="t" style="left:721px;top:616px;font-size:16.2px;line-height:16px;color:#2a2a2a;">db</div>
<div class="t" style="left:379px;top:639px;font-size:16.2px;line-height:16px;color:#2a2a2a;">Utasított súly:</div>
<div style="left:543px;top:637px;width:167px;height:21px;background:#96b0d0;border:1px solid #1a4fa0;box-sizing:border-box;"></div>
<div class="t" style="left:602.5px;top:639px;font-size:16.2px;line-height:16px;color:#262626;">2.700</div>
<div class="t" style="left:721px;top:639px;font-size:16.2px;line-height:16px;color:#2a2a2a;">kg</div>
<div style="left:370px;top:662px;width:864px;height:40px;background:#c7c7c7;"></div>
<div class="t" style="left:395px;top:674px;font-size:20.6px;line-height:20.6px;color:#2a2a2a;font-weight:bold;">Göngyöleg</div>
<div class="t" style="left:379px;top:708px;font-size:16.2px;line-height:16px;color:#2a2a2a;">Egységek:</div>
<div style="left:543px;top:706px;width:680px;height:21px;background:#fafafa;border:1px solid #ababab;box-sizing:border-box;"></div>
<svg style="left:1207px;top:713px" width="12" height="8"><path d="M0 0.5L11.5 0.5L5.75 6.8Z" fill="#b8b8b8"/></svg>
<div style="left:1240px;top:710px;width:21px;height:19px;background:linear-gradient(#f2f2f2,#e4e4e4);"></div>
<svg style="left:1243px;top:712px" width="15" height="15"><path d="M1 9L5 13L14 2" stroke="#4caf86" stroke-width="1.8" fill="none"/></svg>
<div style="left:1267px;top:118px;width:232px;height:483px;background:#0050a0;"></div>
<div style="left:1273px;top:119px;width:225px;height:481px;background:#808080;"></div>
<div class="t" style="left:1281px;top:124px;font-size:19.6px;line-height:20px;color:#c8c8c8;">Komissió menü</div>
<svg style="left:1479px;top:125px" width="13" height="13" viewBox="0 0 13 13"><path d="M1 1L12 12M12 1L1 12" stroke="#fff" stroke-width="2.2" stroke-linecap="round" fill="none"/></svg>
<div style="left:1273px;top:225px;width:225px;height:25px;background:#0050a0;"></div>
<div style="left:1273px;top:212px;width:225px;height:1px;background:#0050a0;"></div>
<div style="left:1273px;top:337px;width:225px;height:1px;background:#0050a0;"></div>
<div style="left:1273px;top:437px;width:225px;height:1px;background:#0050a0;"></div>
<div style="left:1273px;top:562px;width:225px;height:1px;background:#0050a0;"></div>
<div class="t" style="left:1300px;top:154px;font-size:16.2px;line-height:16px;color:#fff;">Fejléc</div>
<div class="t" style="left:1300px;top:179px;font-size:16.2px;line-height:16px;color:#fff;">Ellenőrzés</div>
<div class="t" style="left:1300px;top:229px;font-size:16.2px;line-height:16px;color:#fff;">Utasítás</div>
<div class="t" style="left:1300px;top:254px;font-size:16.2px;line-height:16px;color:#a8a8a8;">Utasítás feldolgozás</div>
<div class="t" style="left:1300px;top:279px;font-size:16.2px;line-height:16px;color:#a8a8a8;">Komissiózás</div>
<div class="t" style="left:1300px;top:304px;font-size:16.2px;line-height:16px;color:#a8a8a8;">Jóváhagyás</div>
<div class="t" style="left:1300px;top:354px;font-size:16.2px;line-height:16px;color:#a8a8a8;">Komissiózás stornó</div>
<div class="t" style="left:1300px;top:379px;font-size:16.2px;line-height:16px;color:#a8a8a8;">Jóváhagyás stornó</div>
<div class="t" style="left:1300px;top:404px;font-size:16.2px;line-height:16px;color:#fff;">Törlés</div>
<div class="t" style="left:1300px;top:454px;font-size:16.2px;line-height:16px;color:#fff;">Göngyölegek</div>
<div class="t" style="left:1300px;top:479px;font-size:16.2px;line-height:16px;color:#a8a8a8;">Fuvar bizonylat(ok)</div>
<div class="t" style="left:1300px;top:504px;font-size:16.2px;line-height:16px;color:#a8a8a8;">Fuvar generálás/frissítés</div>
<div class="t" style="left:1300px;top:529px;font-size:16.2px;line-height:16px;color:#fff;">Nyomtatás</div>
<div class="t" style="left:1300px;top:579px;font-size:16.2px;line-height:16px;color:#fff;">Kilépés</div>
</body></html>
